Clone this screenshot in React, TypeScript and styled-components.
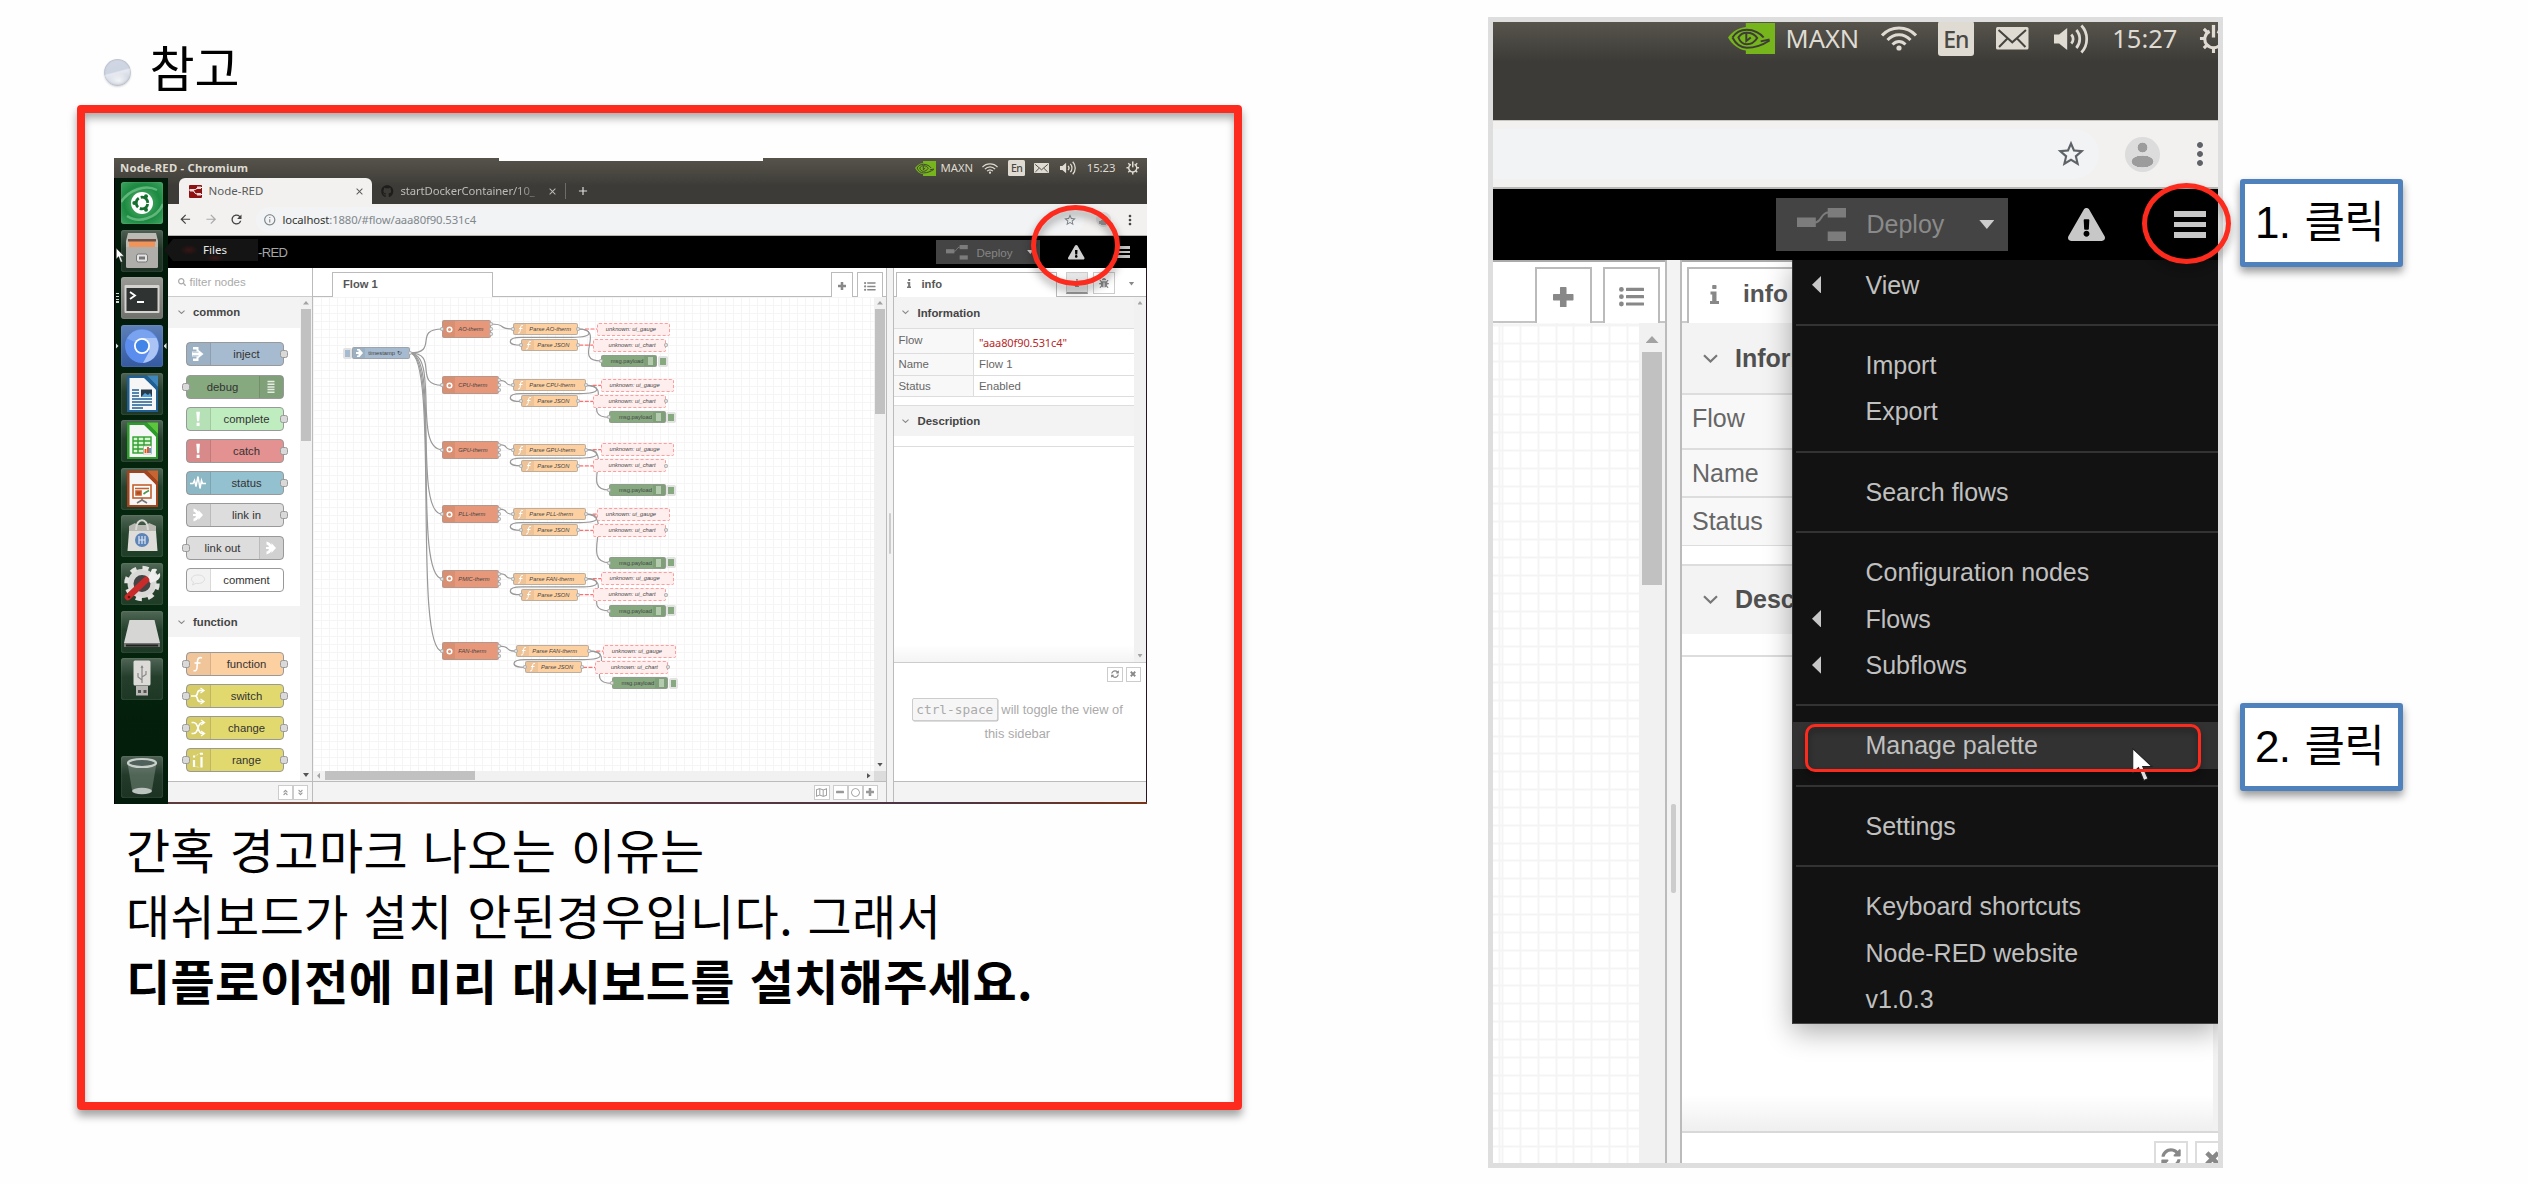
import React from "react";
import styled, { createGlobalStyle, css } from "styled-components";
import {
  FaExclamationTriangle, FaBug, FaSyncAlt,
  FaSearch, FaGithub, FaRegMap, FaAngleDoubleUp, FaAngleDoubleDown, FaRegCircle,
} from "react-icons/fa";
import {
  MdArrowBack, MdArrowForward, MdRefresh, MdInfoOutline, MdClose, MdAdd, MdStarBorder, MdMoreVert,
} from "react-icons/md";

const SANS = `"Liberation Sans", Arial, sans-serif`;
const UBUNTU = `"Noto Sans", "Open Sans", sans-serif`;
const KOREAN = `"Liberation Sans", "Noto Sans CJK KR", sans-serif`;
const MONO = `"DejaVu Sans Mono", monospace`;

const GlobalStyle = createGlobalStyle`
  * { box-sizing: border-box; }
  html, body { margin: 0; padding: 0; background: #fefefe; overflow: hidden; }
  svg { display: block; flex: none; }
`;

/* ---------- slide ---------- */

const Slide = styled.main`
  width: 2528px;
  height: 1184px;
  background: #fefefe;
  display: grid;
  grid-template-columns: 1165px 981px 180px;
  padding-left: 77px;
  font-family: ${SANS};
  overflow: hidden;
  & > :nth-child(2) { margin-left: 246px; }
`;

const NoteColumn = styled.section`
  display: flex;
  flex-direction: column;
`;

const Heading = styled.h1`
  margin: 0;
  height: 105px;
  padding: 31px 0 0 27px;
  display: flex;
  align-items: flex-start;
  gap: 18.5px;
  font: 400 49px/70px "Noto Sans CJK KR", sans-serif;
  color: #000;
`;

const Bullet = styled.span`
  flex: none;
  margin-top: 28px;
  width: 27px;
  height: 27px;
  border-radius: 50%;
  background:
    radial-gradient(ellipse 60% 40% at 55% 80%, rgba(255,255,255,.75), transparent 70%),
    linear-gradient(165deg, #d3d8e4 0%, #cdd4e2 45%, #e6e9f0 50%, #cfd5e0 75%, #a9afba 100%);
  box-shadow: inset 0 0 2px #9298a4, 0 1px 2px rgba(0,0,0,.15);
`;

const RedCard = styled.div`
  width: 1165px;
  height: 1005px;
  border: 8px solid #fd2b1e;
  border-radius: 4px;
  padding: 45px 0 0 29px;
  box-shadow: 0 6px 9px rgba(0,0,0,.36), inset 0 6px 8px -1px rgba(0,0,0,.34);
`;

const Note = styled.p`
  margin: 12px 0 0 12px;
  font: 400 48px/65.5px "Noto Sans CJK KR", sans-serif;
  word-spacing: 3.5px;
  letter-spacing: 0.4px;
  color: #000;
  white-space: nowrap;
  span { display: block; }
`;
const NoteStrong = styled.span`
  font-weight: 700;
`;

const Callouts = styled.aside`
  display: flex;
  flex-direction: column;
  padding: 179px 0 0 17px;
  gap: 436px;
`;
const Callout = styled.div`
  width: 163px;
  height: 88px;
  border: 5px solid #4f81bd;
  border-radius: 3px;
  background: #fff;
  padding-left: 10px;
  display: flex;
  align-items: center;
  white-space: nowrap;
  font: 400 44px/78px ${KOREAN};
  letter-spacing: -0.8px;
  word-spacing: 3px;
  box-shadow: 0 5px 8px rgba(0,0,0,.4);
`;

const Ring = styled.div<{ $x: number; $y: number; $w: number; $h: number }>`
  position: absolute;
  left: ${(p) => p.$x}px;
  top: ${(p) => p.$y}px;
  width: ${(p) => p.$w}px;
  height: ${(p) => p.$h}px;
  border: 5px solid #fd2b1e;
  border-radius: 50%;
  filter: drop-shadow(0 5px 4px rgba(0,0,0,.38));
`;

/* ---------- shared drawings ---------- */

type Size = { w: number; h: number };

const Nvidia = ({ w, h }: Size) => (
  <svg width={w} height={h} viewBox="0 0 48 32" preserveAspectRatio="none">
    <path d="M18 0H48V32H18V28.500C10 27 4 22 0 15 4 9 10 5 18 4z" fill="#76b51b" />
    <g fill="none" stroke="#3d3c37" strokeWidth="2">
      <path d="M4.500 15C8 9.500 13 7 19 7c7 0 14 3.500 17 8" />
      <path d="M4.500 15C8 22 13 25.500 19 25.500c8 0 17-3.500 23-7.500" />
      <path d="M10.500 15c2-3.500 5-5 8.500-5 6 0 9 3 10.500 5.500C27 19.500 23 22 19 22c-4.500 0-7-3-8.500-7z" />
      <path d="M18.500 10.500v8l4.500-3.500" />
      <path d="M33 19l9-2" />
    </g>
  </svg>
);

const Wifi = ({ w, h }: Size) => (
  <svg width={w} height={h} viewBox="0 0 36 25" preserveAspectRatio="none" fill="none" stroke="#dfdbd2" strokeWidth="3">
    <path d="M1 9.500C10-.5 26-.5 35 9.500" />
    <path d="M6.500 14c6.500-7 16.500-7 23 0" />
    <path d="M11.500 18.500c4-4 9-4 13 0" />
    <circle cx="18" cy="22" r="2.600" fill="#dfdbd2" stroke="none" />
  </svg>
);

const Mail = ({ w, h }: Size) => (
  <svg width={w} height={h} viewBox="0 0 32 22" preserveAspectRatio="none">
    <rect width="32" height="22" rx="1.500" fill="#dfdbd2" />
    <path d="M2.500 3l13.500 12L29.500 3M3 19.500l8-8M29 19.500l-8-8" fill="none" stroke="#45443f" strokeWidth="2" />
  </svg>
);

const Volume = ({ w, h }: Size) => (
  <svg width={w} height={h} viewBox="0 0 35 30" preserveAspectRatio="none">
    <path d="M0 10.500h5L13 4v22l-8-6.500H0z" fill="#dfdbd2" />
    <g fill="none" stroke="#dfdbd2" strokeWidth="2.700">
      <path d="M17 10.500c2.500 2.500 2.500 6.500 0 9" />
      <path d="M22 6c4.500 5 4.500 13 0 18" />
      <path d="M27 1.500c7 7.500 7 19.500 0 27" />
    </g>
  </svg>
);

const Gear = ({ s }: { s: number }) => (
  <svg width={s} height={s} viewBox="0 0 30 30">
    <g stroke="#dfdbd2" fill="none">
      <path d="M11 7.500A9 9 0 1 0 19 7.500" strokeWidth="3.200" />
      <path d="M15 1v13" strokeWidth="3.400" />
      <path d="M1 15h5M24 15h5M15 24.500V30M5 5l4 4M25 5l-4 4M5 25l4-4M25 25l-4-4" strokeWidth="3.200" />
    </g>
  </svg>
);

const DeployGlyph = ({ w, h }: Size) => (
  <svg width={w} height={h} viewBox="0 0 50 34" preserveAspectRatio="none">
    <g fill="#7c7c7c">
      <rect x="0" y="9.500" width="19" height="9.500" />
      <rect x="31" y="0" width="18.500" height="9.500" />
      <rect x="31" y="23.500" width="18.500" height="9.500" />
    </g>
    <path d="M18 14.500c7 0 6-10 13.500-10" fill="none" stroke="#7c7c7c" strokeWidth="2" />
  </svg>
);

const Pointer = ({ w, h }: Size) => (
  <svg width={w} height={h} viewBox="0 0 20 32" preserveAspectRatio="none">
    <path d="M.7.700V24l5.500-5 5 12.500 4-1.800-5-11.700h8.800z" fill="#fff" stroke="#222" strokeWidth="1" />
  </svg>
);

const Plus = ({ s }: { s: number }) => (
  <svg width={s} height={s} viewBox="0 0 20 20" fill="currentColor">
    <path d="M7.500 0h5q.7 0 .7.700v6.100h6.100q.7 0 .7.700v5q0 .7-.7.700h-6.100v6.100q0 .7-.7.700h-5q-.7 0-.7-.7v-6.100H.700q-.7 0-.7-.7v-5q0-.7.700-.7h6.100V.700q0-.7.700-.7z" />
  </svg>
);
const Minus = ({ s }: { s: number }) => (
  <svg width={s} height={s} viewBox="0 0 20 20" fill="currentColor"><rect y="7" width="20" height="6" rx="1" /></svg>
);
const BulletList = ({ w, h }: Size) => (
  <svg width={w} height={h} viewBox="0 0 25 19.500" fill="currentColor" preserveAspectRatio="none">
    {[0, 7.3, 14.6].map((y) => (
      <g key={y}>
        <circle cx="2.400" cy={y + 2.4} r="2.400" />
        <rect x="7" y={y + 0.800} width="18" height="3.200" rx=".5" />
      </g>
    ))}
  </svg>
);
const InfoGlyph = ({ w, h }: Size) => (
  <svg width={w} height={h} viewBox="0 0 9 19" fill="currentColor" preserveAspectRatio="none">
    <rect x="2.200" y="0" width="4.300" height="4" rx=".8" />
    <path d="M.5 6.500h6v9.500H9V19H0v-3h2.200V9.500H.500z" />
  </svg>
);
const Chevron = ({ w }: { w: number }) => (
  <svg width={w} height={w * 0.6} viewBox="0 0 15 9" fill="none" stroke="currentColor" strokeWidth="2.200">
    <path d="M1 1.200l6.500 6.300L14 1.200" />
  </svg>
);
const Cross = ({ s }: { s: number }) => (
  <svg width={s} height={s} viewBox="0 0 20 20" stroke="currentColor" strokeWidth="6">
    <path d="M2.500 2.500l15 15M17.500 2.500l-15 15" />
  </svg>
);

const Triangle = styled.i<{ $dir: "up" | "down" | "left" | "right"; $a: number; $b: number; $c?: string }>`
  display: block;
  flex: none;
  width: ${(p) => p.$a}px;
  height: ${(p) => p.$b}px;
  background: ${(p) => p.$c ?? "#555"};
  clip-path: ${(p) =>
    ({
      up: "polygon(50% 0, 100% 100%, 0 100%)",
      down: "polygon(0 0, 100% 0, 50% 100%)",
      left: "polygon(100% 0, 100% 100%, 0 50%)",
      right: "polygon(0 0, 100% 50%, 0 100%)",
    })[p.$dir]};
`;

const Slot = styled.span<{ $ml?: number }>`
  display: flex;
  align-items: center;
  flex: none;
  margin-left: ${(p) => p.$ml ?? 0}px;
`;

/* ---------- desktop window (left) ---------- */

const Desktop = styled.div`
  position: relative;
  width: 1033px;
  height: 646px;
  display: flex;
  flex-direction: column;
  background: #3c3b37;
`;

const TopPanel = styled.div`
  height: 20px;
  flex: none;
  display: flex;
  align-items: center;
  padding-left: 6px;
  background: linear-gradient(#56534b, #45433d);
  font: 400 11.3px/20px ${UBUNTU};
  color: #dfdbd2;
  white-space: nowrap;
`;
const PanelTitle = styled.strong`
  width: 794.500px;
  font-size: 11.3px;
  letter-spacing: 0.2px;
`;
const Lang = styled.span<{ $big?: boolean }>`
  display: block;
  color: #4a4843;
  background: #dfdbd2;
  text-align: center;
  font-family: ${UBUNTU};
  ${(p) =>
    p.$big
      ? css`width: 36px; height: 35px; border-radius: 3px; font-size: 23px; line-height: 36px; letter-spacing: -1px; font-weight: 500;`
      : css`width: 17px; height: 16px; border-radius: 1.5px; font-size: 10.5px; line-height: 16px; letter-spacing: -0.5px; font-weight: 500;`}
`;
const Occluder = styled.div`
  position: absolute;
  left: 385px;
  top: 0;
  width: 264px;
  height: 2.5px;
  background: #fefefe;
`;

const DesktopBody = styled.div`
  flex: 1;
  display: flex;
  min-height: 0;
`;

const Launcher = styled.nav`
  width: 54px;
  flex: none;
  padding: 4.3px 6px 6.3px 5.500px;
  display: flex;
  flex-direction: column;
  gap: 5.600px;
  background: radial-gradient(circle at 60% 60%, #06290f, #021a0a 70%);
  border-left: 1px solid #000;
  & > :last-child { margin-top: auto; }
`;
const Tile = styled.div<{ $bg?: string }>`
  width: 42px;
  height: 42px;
  flex: none;
  border-radius: 3px;
  background: ${(p) => p.$bg ?? "linear-gradient(rgba(255,255,255,.3), rgba(255,255,255,.13) 45%, rgba(255,255,255,.1))"};
  box-shadow: inset 0 0 1.5px rgba(255,255,255,.35);
`;

const Browser = styled.div`
  flex: 1;
  min-width: 0;
  display: flex;
  flex-direction: column;
`;
const TabStrip = styled.div`
  height: 26px;
  flex: none;
  display: flex;
  align-items: flex-end;
  padding-left: 11px;
  background: linear-gradient(#45433d, #3c3b37 30%);
  font: 400 11.5px/26px ${UBUNTU};
`;
const ActiveTab = styled.div`
  width: 193px;
  height: 26px;
  padding: 0 7px 0 10px;
  display: flex;
  align-items: center;
  background: #f2f1f0;
  border-radius: 6px 6px 0 0;
  color: #5a5a5a;
  svg:first-child { margin-right: 6.500px; }
  svg:last-child { margin-left: auto; }
`;
const IdleTab = styled.div`
  height: 26px;
  display: flex;
  align-items: center;
  padding-left: 9px;
  color: #bdbcb8;
  gap: 7px;
`;
const IdleTitle = styled.span`
  width: 139px;
  font-size: 11.3px;
  letter-spacing: -0.1px;
  white-space: nowrap;
  mask-image: linear-gradient(90deg, #000 82%, rgba(0,0,0,.25));
`;
const TabDivider = styled.span`
  width: 1px;
  height: 16px;
  background: #6d6c68;
`;
const AddressBar = styled.div`
  height: 32px;
  flex: none;
  display: flex;
  align-items: center;
  padding-left: 10px;
  background: #f2f1f0;
  border-bottom: 1px solid #b6b4b0;
  color: #444;
  & > svg { margin-right: 11.200px; }
`;
const UrlPill = styled.div`
  flex: 1;
  height: 26px;
  margin-left: 0;
  margin-right: 48px;
  padding: 0 7px 0 7px;
  border-radius: 13px;
  background: #f1f3f4;
  display: flex;
  align-items: center;
  gap: 6.500px;
  font: 400 11.3px/26px ${UBUNTU};
  letter-spacing: -0.12px;
  color: #80868b;
  b { font-weight: 400; color: #333; }
  svg:last-child { margin-left: auto; }
`;
const AddressTools = styled.div`
  display: flex;
  align-items: center;
  margin-left: -36px;
  gap: 11px;
  padding-right: 9px;
`;
const Avatar = styled.span<{ $s: number }>`
  display: block;
  width: ${(p) => p.$s}px;
  height: ${(p) => p.$s}px;
  border-radius: 50%;
  background:
    radial-gradient(circle at 50% 30%, #9c9c9c 15.5%, transparent 17%),
    radial-gradient(ellipse 44% 24% at 50% 70%, #9c9c9c 68%, transparent 72%),
    #dcdcdc;
`;

const EditorHeader = styled.header`
  height: 32px;
  flex: none;
  display: flex;
  align-items: center;
  background: #000;
  color: #c7c7c7;
  padding-left: 90px;
  font-size: 13px;
  position: relative;
`;
const Brand = styled.span`
  width: 678px;
  color: #a5a5a5;
  letter-spacing: -0.6px;
  padding-top: 1px;
`;
const FilesTip = styled.div`
  position: absolute;
  left: -4px;
  top: 3px;
  width: 94px;
  height: 22px;
  padding-left: 39px;
  background:
    radial-gradient(ellipse 9px 5px at 25px 11px, #3a1515, transparent),
    radial-gradient(ellipse 9px 4px at 51px 19px, #3a1515, transparent),
    #141414;
  clip-path: polygon(0 50%, 9px 0, 100% 0, 100% 100%, 9px 100%);
  font: 400 11.5px/22px ${UBUNTU};
  color: #e8e8e8;
`;
const DeployButton = styled.div`
  width: 104px;
  height: 24px;
  display: flex;
  align-items: center;
  padding-left: 10px;
  background: #444;
  color: #868686;
  font-size: 11.6px;
  & > svg { margin-right: 8.500px; }
  & > i { margin-left: 14.500px; }
`;
const Burger = styled.span<{ $w: number; $h: number; $ml: number }>`
  width: ${(p) => p.$w}px;
  height: ${(p) => p.$h}px;
  margin-left: ${(p) => p.$ml}px;
  background: linear-gradient(#c7c7c7 22%, transparent 22% 39%, #c7c7c7 39% 61%, transparent 61% 78%, #c7c7c7 78%);
`;

const Editor = styled.div`
  flex: 1;
  display: flex;
  min-height: 0;
  background: #fff;
  border-right: 1.5px solid #2a1420;
`;
const DeskEdge = styled.div`
  height: 2px;
  flex: none;
  background: linear-gradient(90deg, #5d3a3f, #85503c 25%, #5a3740 50%, #4b3444 80%, #7a3518);
`;

const Palette = styled.div`
  width: 145px;
  flex: none;
  display: flex;
  flex-direction: column;
  border-right: 1px solid #bbb;
`;
const Filter = styled.div`
  height: 29px;
  flex: none;
  display: flex;
  align-items: center;
  gap: 4px;
  padding-left: 9.500px;
  border-bottom: 1px solid #ccc;
  color: #aaa;
  font-size: 11.500px;
`;
const PaletteBody = styled.div`
  flex: 1;
  display: flex;
  min-height: 0;
`;
const PaletteList = styled.div`
  flex: 1;
  overflow: hidden;
`;
const Category = styled.div`
  height: 30.6px;
  display: flex;
  align-items: center;
  gap: 8.500px;
  padding-left: 9.500px;
  background: #f3f3f3;
  color: #444;
  font: 700 11.3px ${SANS};
  & > svg { color: #888; }
`;
const NodeStack = styled.div`
  padding: 14.700px 0 14.500px 17.5px;
  display: flex;
  flex-direction: column;
  gap: 8.230px;
`;
const PNode = styled.div<{ $c: string; $right?: boolean }>`
  position: relative;
  width: 98px;
  height: 24px;
  display: flex;
  flex-direction: ${(p) => (p.$right ? "row-reverse" : "row")};
  background: ${(p) => p.$c};
  border: 1px solid #999;
  border-radius: 4px;
  color: #333;
  font: 400 11.3px/22px ${SANS};
`;
const PIcon = styled.span<{ $right?: boolean }>`
  width: 24px;
  display: flex;
  align-items: center;
  justify-content: center;
  background: rgba(0,0,0,.05);
  border-${(p) => (p.$right ? "left" : "right")}: 1px solid rgba(0,0,0,.1);
`;
const PLabel = styled.span`
  flex: 1;
  text-align: center;
`;
const Port = styled.i<{ $side: "left" | "right" }>`
  position: absolute;
  ${(p) => p.$side}: -5px;
  top: 7px;
  width: 8px;
  height: 8px;
  border: 1px solid #999;
  border-radius: 2.5px;
  background: #d9d9d9;
`;
const Scroll = styled.div<{ $w: number; $pt?: number }>`
  width: ${(p) => p.$w}px;
  flex: none;
  display: flex;
  flex-direction: column;
  align-items: center;
  background: #f1f1f1;
  padding: ${(p) => p.$pt ?? 4}px 0 4px;
`;
const Thumb = styled.div<{ $w: number; $h: number; $m?: number }>`
  width: ${(p) => p.$w}px;
  height: ${(p) => p.$h}px;
  flex: none;
  margin: ${(p) => p.$m ?? 0}px 0;
  background: #c1c1c1;
`;
const Spacer = styled.span`
  flex: 1;
`;
const Footer = styled.div<{ $pr?: number }>`
  height: 21px;
  flex: none;
  display: flex;
  align-items: center;
  justify-content: flex-end;
  padding-right: ${(p) => p.$pr ?? 0}px;
  background: #f3f3f3;
  border-top: 1px solid #bbb;
`;
const MiniButton = styled.span<{ $ml?: number }>`
  width: 15.500px;
  height: 15px;
  margin-left: ${(p) => p.$ml ?? -0.5}px;
  display: flex;
  align-items: center;
  justify-content: center;
  border: 1px solid #ccc;
  background: #fff;
  color: #999;
`;

const Workspace = styled.div`
  width: 574px;
  flex: none;
  display: flex;
  flex-direction: column;
  border-right: 1px solid #bbb;
`;
const WorkTabs = styled.div`
  height: 29px;
  flex: none;
  display: flex;
  align-items: flex-end;
  padding-left: 19px;
  box-shadow: inset 0 -1px #bbb;
`;
const FlowTab = styled.div`
  width: 161px;
  height: 25px;
  padding-left: 10px;
  border: 1px solid #bbb;
  border-bottom: none;
  background: #fff;
  color: #555;
  font: 700 11.2px/23px ${SANS};
`;
const TabButton = styled.span<{ $s: number; $h: number; $ml?: number | string }>`
  width: ${(p) => p.$s}px;
  height: ${(p) => p.$h}px;
  margin-left: ${(p) => (typeof p.$ml === "string" ? p.$ml : `${p.$ml ?? 0}px`)};
  padding-top: 2px;
  display: flex;
  align-items: center;
  justify-content: center;
  border: 1px solid #bbb;
  border-bottom: none;
  background: #fff;
  color: #888;
`;
const CanvasRow = styled.div`
  flex: 1;
  display: flex;
  min-height: 0;
`;
const Canvas = styled.div`
  position: relative;
  width: 562px;
  overflow: hidden;
  background:
    repeating-linear-gradient(90deg, #f5f5f5 0 1px, transparent 1px 8.07px),
    repeating-linear-gradient(#f5f5f5 0 1px, transparent 1px 8.07px),
    #fff;
`;
const HScroll = styled.div`
  height: 10.5px;
  flex: none;
  display: flex;
  align-items: center;
  padding-left: 4px;
  background: #f1f1f1;
`;
const Corner = styled.span`
  width: 12px;
  height: 10.5px;
  margin-left: 3.5px;
  background: #dcdcdc;
`;
const Wires = styled.svg`
  position: absolute;
  left: 0;
  top: 0;
`;
const FlowNode = styled.div<{ $x: number; $y: number; $w: number; $h: number; $c: string; $pad: number; $unknown?: boolean; $plain?: boolean }>`
  position: absolute;
  left: ${(p) => p.$x - 313}px;
  top: ${(p) => p.$y - p.$h / 2 - 297}px;
  width: ${(p) => p.$w}px;
  height: ${(p) => p.$h}px;
  padding-left: ${(p) => p.$pad}px;
  background: ${(p) => p.$c};
  border: ${(p) => (p.$unknown ? "1px dashed #ff9c9c" : "0.5px solid rgba(150,150,150,.6)")};
  border-radius: 2px;
  color: #444;
  font: ${(p) => (p.$plain ? "normal" : "italic")} 400 5.8px/${(p) => p.$h - 1.5}px ${SANS};
  white-space: nowrap;
`;
const NodeIcon = styled.span<{ $w: number; $right?: boolean }>`
  position: absolute;
  ${(p) => (p.$right ? "right" : "left")}: 0;
  top: 0;
  bottom: 0;
  width: ${(p) => p.$w}px;
  background: rgba(0,0,0,.06);
  display: flex;
  align-items: center;
  justify-content: center;
`;
const Dot = styled.i<{ $x: number; $y: number }>`
  position: absolute;
  left: ${(p) => p.$x - 315.1}px;
  top: ${(p) => p.$y - 299.1}px;
  width: 4.2px;
  height: 4.2px;
  border-radius: 1.500px;
  border: 0.600px solid #aaa;
  background: #dcdcdc;
`;
const NodeButton = styled.i<{ $x: number; $y: number; $c: string }>`
  position: absolute;
  left: ${(p) => p.$x - 313}px;
  top: ${(p) => p.$y - 302.5}px;
  width: 9.5px;
  height: 11px;
  border: 2px solid #e2e2e2;
  border-radius: 2px;
  background: ${(p) => p.$c};
`;

const Separator = styled.div<{ $w: number; $b?: number }>`
  width: ${(p) => p.$w}px;
  flex: none;
  display: flex;
  justify-content: center;
  background: #f3f3f3;
  border-right: ${(p) => p.$b ?? 1}px solid #bbb;
`;
const Grip = styled.span<{ $w: number; $h: number; $mt: number }>`
  width: ${(p) => p.$w}px;
  height: ${(p) => p.$h}px;
  margin-top: ${(p) => p.$mt}px;
  border-radius: 2px;
  background: #ccc;
`;
const Sidebar = styled.div`
  flex: 1;
  min-width: 0;
  display: flex;
  flex-direction: column;
`;
const SideTabs = styled.div`
  height: 29px;
  flex: none;
  display: flex;
  align-items: flex-end;
  padding-left: 2px;
  box-shadow: inset 0 -1px #bbb;
`;
const InfoTab = styled.div`
  width: 161.5px;
  height: 25.5px;
  padding: 0 0 2px 10px;
  display: flex;
  align-items: center;
  gap: 10.500px;
  border: 1px solid #bbb;
  border-bottom: none;
  background: #fff;
  color: #555;
  font: 700 11.2px/24px ${SANS};
  svg { color: #777; }
`;
const SideButton = styled.span<{ $on?: boolean; $ml: number }>`
  width: 22px;
  height: 22px;
  margin-left: ${(p) => p.$ml}px;
  margin-bottom: 3px;
  display: flex;
  align-items: center;
  justify-content: center;
  border: 1px solid #ccc;
  border-bottom: ${(p) => (p.$on ? "2px solid #999" : "1px solid #ccc")};
  background: ${(p) => (p.$on ? "#e6e6e6" : "#fff")};
  color: #888;
`;
const SideCaret = styled.span`
  height: 27px;
  margin-left: 13.500px;
  display: flex;
  align-items: center;
`;
const SideBody = styled.div`
  height: 364.5px;
  flex: none;
  display: flex;
`;
const SideContent = styled.div`
  flex: 1;
  background: linear-gradient(transparent 348px, #f4f4f4);
`;
const Section = styled.div<{ $mt?: number }>`
  height: 31px;
  margin-top: ${(p) => p.$mt ?? 0}px;
  display: flex;
  align-items: center;
  gap: 8.500px;
  padding-left: 8.500px;
  background: #f3f3f3;
  border-top: ${(p) => (p.$mt ? "1px solid #ddd" : "none")};
  color: #444;
  font: 700 11.4px ${SANS};
  & > svg { color: #888; }
`;
const PropRow = styled.div<{ $h: number }>`
  height: ${(p) => p.$h}px;
  display: grid;
  grid-template-columns: 80.500px 1fr;
  align-items: center;
  border-top: 1px solid #ddd;
  background: linear-gradient(90deg, #f8f8f8 79.500px, #ddd 79.500px 80.5px, #fff 80.5px);
  color: #666;
  font-size: 11.4px;
  & > span { padding-left: 5px; }
`;
const TopCell = styled.span`
  padding-bottom: 3px;
`;
const IdValue = styled.span`
  color: #b72828;
  font: 400 11px "Noto Sans", sans-serif;
  padding-top: 2px;
  letter-spacing: -0.1px;
`;
const Rule = styled.div<{ $mt: number }>`
  margin-top: ${(p) => p.$mt}px;
  height: 1px;
  background: #ddd;
`;
const Tips = styled.div`
  flex: 1;
  border-top: 1px solid #ccc;
  padding: 4px 5px 0 0;
  color: #aaa;
  font-size: 12.850px;
  line-height: 24px;
  text-align: center;
  white-space: nowrap;
`;
const TipButtons = styled.div`
  display: flex;
  justify-content: flex-end;
  gap: 3px;
  height: 31px;
  svg { color: #888; }
`;
const Kbd = styled.kbd`
  display: inline-block;
  height: 23px;
  padding: 0 3.500px;
  border: 1px solid #ccc;
  border-radius: 2px;
  box-shadow: 0.5px 0.500px 0 #bbb;
  background: #f6f6f6;
  font: 400 12.800px/21px ${MONO};
`;

/* ---------- launcher artwork ---------- */

const docTile = (dark: string, light: string, body: React.ReactNode) => (
  <Tile>
    <svg width="42" height="42" viewBox="0 0 42 42">
      <path d="M6 2.500h20L37 14v25H6z" fill={dark} />
      <path d="M8.500 5H24l11 11.500V37h-26.500z" fill="#f6f6f6" />
      <path d="M26 2.500H37V14z" fill={light} />
      <path d="M23 5l12 11.500V12L28 5z" fill={dark} />
      {body}
    </svg>
  </Tile>
);

const LauncherIcons = () => (
  <Launcher>
    <Tile $bg="radial-gradient(circle at 50% 50%, #5fb878, #1c8a41 60%, #3fa361)">
      <svg width="42" height="42" viewBox="0 0 42 42">
        <path d="M0 20C8 8 24 2 36 8M42 22C36 36 18 42 6 34" stroke="#7cc893" strokeWidth="2.500" fill="none" opacity=".7" />
        <circle cx="21" cy="21" r="11" fill="#fff" />
        <circle cx="21" cy="21" r="5.800" fill="none" stroke="#15702f" strokeWidth="2.800" strokeDasharray="10.100 2.050" strokeDashoffset="-1" />
        <circle cx="13.300" cy="21" r="2" fill="#15702f" />
        <circle cx="25" cy="14.200" r="2" fill="#15702f" />
        <circle cx="25" cy="27.800" r="2" fill="#15702f" />
      </svg>
    </Tile>
    <Tile>
      <svg width="42" height="42" viewBox="0 0 42 42">
        <path d="M7 3h28l2 8v26H5V11z" fill="#bcbab5" />
        <path d="M8 10h26v8H8z" fill="#f0945a" />
        <path d="M7 9h28v2.500H7z" fill="#6a5046" />
        <path d="M5 17h32v19.500q0 1.500-1.500 1.500h-29Q5 38 5 36.500z" fill="#b0aeaa" />
        <rect x="15.500" y="24" width="11" height="8" rx="2" fill="#e4e4e4" stroke="#777" />
        <rect x="18" y="26.500" width="6" height="3" fill="#777" />
      </svg>
    </Tile>
    <Tile $bg="linear-gradient(#9a9a96, #6f6f6b)">
      <svg width="42" height="42" viewBox="0 0 42 42">
        <rect x="3.500" y="8" width="35" height="28" rx="1" fill="#d4d3cf" />
        <rect x="5.500" y="11" width="31" height="23" fill="#2f3331" />
        <path d="M9 15l5 3.500-5 3.500M16 25h7" stroke="#fff" strokeWidth="1.800" fill="none" />
      </svg>
    </Tile>
    <Tile $bg="linear-gradient(#5d80b8, #3459a0)">
      <svg width="42" height="42" viewBox="0 0 42 42">
        <circle cx="21" cy="21" r="17" fill="#5b8def" />
        <path d="M21 13h14.500A17 17 0 0 1 22 38l6.500-12z" fill="#a9c4f5" />
        <path d="M6 13.500A17 17 0 0 1 35.500 13H21a8 8 0 0 0-7 4z" fill="#79a3ef" />
        <circle cx="21" cy="21" r="8" fill="#fff" />
        <circle cx="21" cy="21" r="6.200" fill="#4285e8" />
      </svg>
    </Tile>
    {docTile("#1f5f93", "#3f86bd", (
      <g stroke="#1f5f93" strokeWidth="1.600">
        <path d="M11 17h7M11 20h7M11 23h7M11 26h20M11 29h20M11 32h20M11 35h11" />
        <rect x="20" y="16.500" width="11" height="7.500" fill="#263a4a" stroke="none" />
        <path d="M20 24l4-4 3 2 2-2 2 4z" fill="#53a4dd" stroke="none" />
      </g>
    ))}
    {docTile("#2d9c2d", "#5ac63c", (
      <g stroke="#2fa02f" strokeWidth="1.400" fill="none">
        <rect x="12" y="17" width="18" height="16" fill="#d9f4d0" />
        <path d="M12 21h18M12 25h18M12 29h18M17 17v16M23 17v16" />
        <rect x="22.500" y="26" width="8" height="8" fill="#fff" stroke="#aaa" strokeWidth=".6" />
        <path d="M24.500 33v-4M27 33v-6" stroke="#e65a1e" strokeWidth="2" />
        <path d="M29 33v-5" stroke="#2f7fc8" strokeWidth="1.600" />
      </g>
    ))}
    {docTile("#a4431c", "#c86432", (
      <g stroke="#c2602f" strokeWidth="1.600" fill="none">
        <rect x="12" y="17" width="18" height="13" fill="#fff" />
        <path d="M14 20.500h14" />
        <path d="M15 23h5v4h-5z" fill="#b24a20" />
        <path d="M22.500 26l2-1.500 3.500-2" stroke="#4a9a4a" />
        <path d="M21 30v2M16 35l5-3 5 3" stroke="#777" />
      </g>
    ))}
    <Tile>
      <svg width="42" height="42" viewBox="0 0 42 42">
        <path d="M8 16h27l1.500 20H6.500z" fill="#deddda" />
        <path d="M8 11l6-3 2 2h10l2-2 7 3v5H8z" fill="#b9b9b4" />
        <path d="M15 15c0-13 12-13 12 0" fill="none" stroke="#d8d8d4" strokeWidth="2" />
        <circle cx="21" cy="25" r="7" fill="#5c84b8" />
        <path d="M18 21v8M21 21v8M24 21v8M17.500 25h7" stroke="#dfe8f3" strokeWidth="1.200" />
      </svg>
    </Tile>
    <Tile>
      <svg width="42" height="42" viewBox="0 0 42 42">
        <circle cx="21" cy="20.500" r="11.500" fill="#444" stroke="#d8d8d6" strokeWidth="6" />
        <circle cx="21" cy="20.500" r="15.500" fill="none" stroke="#e2e2e0" strokeWidth="4.500" strokeDasharray="6.087 6.087" />
        <path d="M27 15l4-9q5-1 5 1l-3 4 3 1 3-2q1 6-4 8l-6 2z" fill="#efefef" />
        <path d="M7 34L25 17" stroke="#c92a2a" strokeWidth="6.500" strokeLinecap="round" />
        <circle cx="8" cy="34" r="1.300" fill="#701010" />
      </svg>
    </Tile>
    <Tile>
      <svg width="42" height="42" viewBox="0 0 42 42">
        <path d="M8.500 9h25l5.500 23H3z" fill="#d6d6d4" />
        <path d="M3 32h36v4H3z" fill="#777" />
        <path d="M5 33.500h32v2H5z" fill="#222" />
      </svg>
    </Tile>
    <Tile>
      <svg width="42" height="42" viewBox="0 0 42 42">
        <rect x="12.500" y="2.500" width="17" height="25" rx="1.500" fill="#dcdbd8" />
        <rect x="15" y="28" width="12" height="9.500" fill="#b9b8b4" />
        <path d="M17 32h3v3h-3zM22.500 32h3v3h-3z" fill="#555" />
        <path d="M21 25V8M21 22l-4-3v-4M21 19l4-2.500V13" stroke="#888" strokeWidth="1.200" fill="none" />
        <path d="M19.500 10L21 7l1.500 3z" fill="#888" />
      </svg>
    </Tile>
    <Tile>
      <svg width="42" height="42" viewBox="0 0 42 42">
        <path d="M6.500 7l4.500 27q10 5 20 0L35.500 7z" fill="rgba(200,215,205,.28)" />
        <ellipse cx="21" cy="7" rx="14" ry="4" fill="#50605a" stroke="#c8d0cb" strokeWidth="2.200" />
        <ellipse cx="21" cy="35" rx="10" ry="3.200" fill="#bcc4bf" />
      </svg>
    </Tile>
  </Launcher>
);

const RunningMark = styled.span<{ $y: number; $x: number; $dir: "left" | "right" }>`
  position: absolute;
  left: ${(p) => p.$x}px;
  top: ${(p) => p.$y}px;
  width: 3px;
  height: 6px;
  background: #e4e4e4;
  clip-path: ${(p) => (p.$dir === "right" ? "polygon(0 0, 100% 50%, 0 100%)" : "polygon(100% 0, 100% 100%, 0 50%)")};
`;
const WindowTicks = styled.span`
  position: absolute;
  left: 1.5px;
  top: 135px;
  width: 3px;
  height: 10px;
  background: repeating-linear-gradient(#d8d8d8 0 1.5px, transparent 1.5px 2.800px);
`;

/* ---------- palette ---------- */

const W = ({ children }: { children: React.ReactNode }) => (
  <svg width="18" height="18" viewBox="0 0 18 18" fill="none" stroke="#fff" strokeWidth="1.600">{children}</svg>
);
const icons: Record<string, React.ReactNode> = {
  arrow: <W><path d="M4 2h5.500v3L14.500 9l-5 4v3H4v-2.500h3.500v-2H3v-5h4.500v-2H4z" fill="#fff" strokeWidth="0" /><path d="M3.500 7.200h6M3.500 10.800h6" stroke="#9db1c5" strokeWidth=".8" /></W>,
  list: <W><path d="M5.500 3.500h7M5.500 6.200h7M5.500 8.900h7M5.500 11.600h7M5.500 14.300h7" strokeWidth="1.500" opacity=".8" /></W>,
  bang: <W><path d="M7.300 1.800h3.600l-.7 9.400H8z" fill="#fff" stroke="none" /><rect x="7.600" y="12.700" width="3" height="3.300" fill="#fff" stroke="none" /></W>,
  pulse: <W><path d="M1 9.500h3l1.500-3 1.500 6L9 2.500l2 12 1.500-8 1 3H17" strokeWidth="1.500" /></W>,
  link: <W><path d="M4.500 2.500q3.500.5 5 3.500V4l4.500 5-4.500 5v-2q-1.500 3-5 3.500V12.500q2 0 2.500-2.500H4V8h3Q6.500 5.500 4.500 5.500z" fill="#fff" stroke="none" /></W>,
  comment: <W><path d="M9 4c4 0 6.500 1.800 6.500 4.200S13 12.500 9 12.500c-1 0-1.500-.2-2-.2L3.500 14l1-2.800C3.200 10.500 2.500 9.500 2.500 8.200 2.500 5.800 5 4 9 4z" stroke="#ddd" strokeWidth="1" /></W>,
  func: <W><path d="M13 3q-4-1.500-4.500 3L8 13q-.5 3.500-3.500 2.500M5.500 8h6" /></W>,
  sw: <W><path d="M2 9h4q2 0 2.500-3T12 3.500h2M6 9q2 0 2.500 3t3.500 2.500h2" /><path d="M11.500 1l3.500 2.500-3.500 2.500M11.500 12l3.500 2.500-3.500 2.500" strokeWidth="1.300" /></W>,
  change: <W><path d="M2.500 3.500h2q3 0 4.500 5.500t4.500 5.500H15M2.500 14.500h2q3 0 4.500-5.500t4.500-5.500H15" /><path d="M12 1l3.500 2.500L12 6M12 12l3.500 2.500L12 17" strokeWidth="1.300" /></W>,
  range: <W><path d="M5 9v7M12.500 6v10.500" strokeWidth="2.200" /><path d="M4 5.500h2M11 2.700h3" strokeWidth="2" /><path d="M6.500 5l4-2.500M6.500 15.500l4 1" strokeWidth=".7" strokeDasharray="1 1" /></W>,
};

type PaletteItem = { label: string; c: string; icon: string; right?: boolean; inp?: boolean; out?: boolean };
const COMMON: PaletteItem[] = [
  { label: "inject", c: "#a6bbcf", icon: "arrow", out: true },
  { label: "debug", c: "#87a980", icon: "list", right: true, inp: true },
  { label: "complete", c: "#c0edc0", icon: "bang", out: true },
  { label: "catch", c: "#e49191", icon: "bang", out: true },
  { label: "status", c: "#94c1d0", icon: "pulse", out: true },
  { label: "link in", c: "#dddddd", icon: "link", out: true },
  { label: "link out", c: "#dddddd", icon: "link", right: true, inp: true },
  { label: "comment", c: "#ffffff", icon: "comment" },
];
const FUNCTIONS: PaletteItem[] = [
  { label: "function", c: "#fdd0a2", icon: "func", inp: true, out: true },
  { label: "switch", c: "#e2d96e", icon: "sw", inp: true, out: true },
  { label: "change", c: "#e2d96e", icon: "change", inp: true, out: true },
  { label: "range", c: "#e2d96e", icon: "range", inp: true, out: true },
];
const PaletteNodes = ({ items }: { items: PaletteItem[] }) => (
  <NodeStack>
    {items.map((n) => (
      <PNode key={n.label} $c={n.c} $right={n.right}>
        <PIcon $right={n.right}>{icons[n.icon]}</PIcon>
        <PLabel>{n.label}</PLabel>
        {n.inp && <Port $side="left" />}
        {n.out && <Port $side="right" />}
      </PNode>
    ))}
  </NodeStack>
);

/* ---------- flow diagram ---------- */

type Group = { name: string; parse: string; y: number; tw: number; px: number; pw: number; jx: number; gx: number; cx: number; mx: number; my: number };
const GROUPS: Group[] = [
  { name: "AO-therm", parse: "Parse AO-therm", y: 329, tw: 48.4, px: 513.3, pw: 64.700, jx: 521.3, gx: 597.3, cx: 593, mx: 601, my: 361 },
  { name: "CPU-therm", parse: "Parse CPU-therm", y: 385.3, tw: 56.600, px: 513.3, pw: 72.400, jx: 521.3, gx: 601, cx: 593, mx: 609.3, my: 417.4 },
  { name: "GPU-therm", parse: "Parse GPU-therm", y: 449.700, tw: 56.600, px: 513.3, pw: 72.400, jx: 521.3, gx: 601, cx: 593, mx: 609.3, my: 490 },
  { name: "PLL-therm", parse: "Parse PLL-therm", y: 514.200, tw: 56.600, px: 513.3, pw: 72.400, jx: 521.3, gx: 597.3, cx: 593, mx: 609.3, my: 562.600 },
  { name: "PMIC-therm", parse: "Parse FAN-therm", y: 578.600, tw: 56.600, px: 513.3, pw: 72.400, jx: 521.3, gx: 601, cx: 593, mx: 609.3, my: 610.800 },
  { name: "FAN-therm", parse: "Parse FAN-therm", y: 651.200, tw: 56.600, px: 516.3, pw: 73, jx: 525, gx: 603.3, cx: 595.4, mx: 611.700, my: 683.400 },
];

const wire = (x1: number, y1: number, x2: number, y2: number) => {
  const d = Math.hypot(x2 - x1, y2 - y1);
  const k = 30 * Math.min(1, d / 40);
  return `M${x1} ${y1}C${x1 + k} ${y1} ${x2 - k} ${y2} ${x2} ${y2}`;
};
const loopBack = (x1: number, y1: number, x2: number, y2: number) => {
  const m = (y1 + y2) / 2;
  return `M${x1} ${y1}C${x1 + 8} ${y1} ${x1 + 11} ${y1 + 2} ${x1 + 11} ${y1 + 4.3}S${x1 + 5} ${m + 0.3} ${x1 - 6} ${m + 0.3}L${x2} ${m + 0.3}C${x2 - 7} ${m + 0.3} ${x2 - 11} ${m + 1} ${x2 - 11} ${y2 - 3.7}S${x2 - 7} ${y2} ${x2} ${y2}`;
};

const FnIcon = () => (
  <NodeIcon $w={12}>
    <svg width="7" height="10" viewBox="0 0 7 10"><path d="M6 1.500Q4 .5 3.700 3L3 7.500Q2.700 9.500 1 9M2 4.500h3.500" stroke="#fff" fill="none" /></svg>
  </NodeIcon>
);

const Flow = () => (
  <Canvas>
    <Wires width="562" height="474" viewBox="313 297 562 474">
      <g fill="none" stroke="#999" strokeWidth="1.200">
        {GROUPS.map((g) => (
          <React.Fragment key={g.name}>
            <path d={wire(409.700, 353, 442.3, g.y)} />
            <path d={wire(442.3 + g.tw, g.y - 5, g.px, g.y)} />
            <path d={wire(g.px + g.pw, g.y, g.mx, g.my)} />
            <path d={loopBack(g.px + g.pw, g.y, g.jx, g.y + 16.100)} />
          </React.Fragment>
        ))}
      </g>
      <g stroke="#ff6f6f" strokeWidth="1.200" strokeDasharray="4 1.500">
        {GROUPS.map((g) => (
          <path key={g.name} d={`M${g.px + g.pw + 7} ${g.y}H${g.gx}M${g.jx + 58} ${g.y + 16.100}H${g.cx}`} />
        ))}
      </g>
    </Wires>
    <NodeButton $x={342.700} $y={353} $c="#a6bbcf" />
    <FlowNode $plain $x={352.3} $y={353} $w={57.4} $h={12} $c="#a6bbcf" $pad={15}>
      <NodeIcon $w={12}><svg width="7" height="8" viewBox="0 0 7 8"><path d="M1 0h2.500L7 4 3.500 8H1V6.500h1.500v-1.500H0V3h2.500V1.500H1z" fill="#fff" /></svg></NodeIcon>
      timestamp ↻
    </FlowNode>
    <Dot $x={409.700} $y={353} />
    {GROUPS.map((g) => (
      <React.Fragment key={g.name}>
        <FlowNode $x={442.3} $y={g.y} $w={g.tw} $h={18} $c="#e7987a" $pad={15}>
          <NodeIcon $w={11.700}><svg width="7" height="7" viewBox="0 0 7 7"><circle cx="3.500" cy="3.500" r="2.300" fill="none" stroke="#fff" strokeWidth="1.500" /></svg></NodeIcon>
          {g.name}
        </FlowNode>
        <Dot $x={442.3} $y={g.y} />
        {[-5, 0, 5].map((o) => <Dot key={o} $x={442.3 + g.tw} $y={g.y + o} />)}
        <FlowNode $x={g.px} $y={g.y} $w={g.pw} $h={12} $c="#fdd0a2" $pad={15}><FnIcon />{g.parse}</FlowNode>
        <Dot $x={g.px} $y={g.y} />
        <Dot $x={g.px + g.pw} $y={g.y} />
        <FlowNode $x={g.jx} $y={g.y + 16.1} $w={56.600} $h={12} $c="#fdd0a2" $pad={15}><FnIcon />Parse JSON</FlowNode>
        <Dot $x={g.jx} $y={g.y + 16.1} />
        <Dot $x={g.jx + 56.600} $y={g.y + 16.1} />
        <FlowNode $unknown $x={g.gx} $y={g.y} $w={72.600} $h={13} $c="#ffeeee" $pad={7.5}>unknown: ui_gauge</FlowNode>
        <FlowNode $unknown $x={g.cx} $y={g.y + 16.1} $w={72.600} $h={13} $c="#ffeeee" $pad={14.5}>unknown: ui_chart</FlowNode>
        <Dot $x={g.cx + 72.600} $y={g.y + 16.1} />
        <FlowNode $plain $x={g.mx} $y={g.my} $w={56.4} $h={12} $c="#87a980" $pad={8.700}>
          msg.payload
          <NodeIcon $w={12} $right><svg width="5" height="8"><rect width="5" height="8" fill="#b4cbb0" /></svg></NodeIcon>
        </FlowNode>
        <Dot $x={g.mx} $y={g.my} />
        <NodeButton $x={g.mx + 57} $y={g.my} $c="#87a980" />
      </React.Fragment>
    ))}
  </Canvas>
);

const PointerSpot = styled.div<{ $x: number; $y: number }>`
  position: absolute;
  left: ${(p) => p.$x}px;
  top: ${(p) => p.$y}px;
`;

const DesktopShot = () => (
  <Desktop>
    <TopPanel>
      <PanelTitle>Node-RED - Chromium</PanelTitle>
      <Slot><Nvidia w={21.500} h={15} /></Slot>
      <Slot $ml={4.5}>MAXN</Slot>
      <Slot $ml={9}><Wifi w={16} h={11} /></Slot>
      <Slot $ml={10}><Lang>En</Lang></Slot>
      <Slot $ml={9}><Mail w={15} h={10} /></Slot>
      <Slot $ml={11}><Volume w={16.500} h={14} /></Slot>
      <Slot $ml={10}>15:23</Slot>
      <Slot $ml={10.500}><Gear s={13.500} /></Slot>
    </TopPanel>
    <Occluder />
    <DesktopBody>
      <LauncherIcons />
      <Browser>
        <TabStrip>
          <ActiveTab>
            <svg width="13" height="13" viewBox="0 0 13 13"><rect width="13" height="13" rx="1" fill="#8f1010" /><path d="M0 5h4q3 0 5-2.500h4M4 5q2 4.500 5 4.500h4" stroke="#fff" fill="none" /><path d="M1 4h4v2.500H1zM8 1.500h4V4H8zM8 8h4v2.500H8z" fill="#f2d8d8" /></svg>
            Node-RED
            <MdClose size={11} />
          </ActiveTab>
          <IdleTab>
            <FaGithub size={12.5} color="#1e1d1b" />
            <IdleTitle>startDockerContainer/10_</IdleTitle>
            <MdClose size={11} />
            <TabDivider />
            <Slot $ml={3}><MdAdd size={14} color="#ddd" /></Slot>
          </IdleTab>
        </TabStrip>
        <AddressBar>
          <MdArrowBack size={14.500} />
          <MdArrowForward size={14.500} color="#aaa" />
          <MdRefresh size={15} />
          <UrlPill>
            <MdInfoOutline size={13.5} />
            <span><b>localhost</b>:1880/#flow/aaa80f90.531c4</span>
            <MdStarBorder size={14} />
          </UrlPill>
          <AddressTools>
            <Avatar $s={15} />
            <MdMoreVert size={16} />
          </AddressTools>
        </AddressBar>
        <EditorHeader>
          <FilesTip>Files</FilesTip>
          <Brand>-RED</Brand>
          <DeployButton><DeployGlyph w={22} h={15} />Deploy<Triangle $dir="down" $a={6.500} $b={4} $c="#ccc" /></DeployButton>
          <Slot $ml={28}><FaExclamationTriangle size={16.500} color="#d0d0d0" /></Slot>
          <Burger $w={14.500} $h={12.500} $ml={31} />
        </EditorHeader>
        <Editor>
          <Palette>
            <Filter><FaSearch size={8} />filter nodes</Filter>
            <PaletteBody>
              <PaletteList>
                <Category><Chevron w={7} />common</Category>
                <PaletteNodes items={COMMON} />
                <Category><Chevron w={7} />function</Category>
                <PaletteNodes items={FUNCTIONS} />
              </PaletteList>
              <Scroll $w={12}>
                <Triangle $dir="up" $a={6} $b={3.5} $c="#a3a3a3" />
                <Thumb $w={9.500} $h={132} $m={4.500} />
                <Spacer />
                <Triangle $dir="down" $a={6} $b={4} />
              </Scroll>
            </PaletteBody>
            <Footer $pr={4}>
              <MiniButton><FaAngleDoubleUp size={7} /></MiniButton>
              <MiniButton><FaAngleDoubleDown size={7} /></MiniButton>
            </Footer>
          </Palette>
          <Workspace>
            <WorkTabs>
              <FlowTab>Flow 1</FlowTab>
              <TabButton $s={22} $h={25} $ml="auto"><Plus s={8} /></TabButton>
              <Slot $ml={4.500}><TabButton $s={26} $h={25}><BulletList w={11.500} h={9} /></TabButton></Slot>
              <Slot $ml={3} />
            </WorkTabs>
            <CanvasRow>
              <Flow />
              <Scroll $w={12}>
                <Triangle $dir="up" $a={6} $b={3.5} $c="#a3a3a3" />
                <Thumb $w={9.500} $h={105} $m={4.500} />
                <Spacer />
                <Triangle $dir="down" $a={6} $b={4} />
              </Scroll>
            </CanvasRow>
            <HScroll>
              <Triangle $dir="left" $a={3} $b={6} $c="#a3a3a3" />
              <Slot $ml={5}><Thumb $w={149.500} $h={9} /></Slot>
              <Spacer />
              <Triangle $dir="right" $a={4} $b={6} />
              <Corner />
            </HScroll>
            <Footer $pr={8}>
              <MiniButton><FaRegMap size={11} /></MiniButton>
              <MiniButton $ml={3}><Minus s={8} /></MiniButton>
              <MiniButton><FaRegCircle size={9} /></MiniButton>
              <MiniButton><Plus s={8} /></MiniButton>
            </Footer>
          </Workspace>
          <Separator $w={6.500}><Grip $w={2.400} $h={41} $mt={245} /></Separator>
          <Sidebar>
            <SideTabs>
              <InfoTab><InfoGlyph w={4.500} h={9} />info</InfoTab>
              <SideButton $on $ml={8.500}><InfoGlyph w={4} h={8} /></SideButton>
              <SideButton $ml={5.500}><FaBug size={10} /></SideButton>
              <SideCaret><Triangle $dir="down" $a={6} $b={4} $c="#888" /></SideCaret>
            </SideTabs>
            <SideBody>
              <SideContent>
                <Section><Chevron w={7} />Information</Section>
                <PropRow $h={25}><TopCell>Flow</TopCell><IdValue>"aaa80f90.531c4"</IdValue></PropRow>
                <PropRow $h={21.600}><span>Name</span><span>Flow 1</span></PropRow>
                <PropRow $h={21.600}><span>Status</span><span>Enabled</span></PropRow>
                <Rule $mt={0} />
                <Section $mt={8}><Chevron w={7} />Description</Section>
                <Rule $mt={9.500} />
              </SideContent>
              <Scroll $w={12}>
                <Triangle $dir="up" $a={5} $b={3.5} $c="#a3a3a3" />
                <Spacer />
                <Triangle $dir="down" $a={5} $b={3.5} $c="#a3a3a3" />
              </Scroll>
            </SideBody>
            <Tips>
              <TipButtons>
                <MiniButton $ml={0}><FaSyncAlt size={8} /></MiniButton>
                <MiniButton $ml={0}><Cross s={6} /></MiniButton>
              </TipButtons>
              <Kbd>ctrl-space</Kbd> will toggle the view of<br />this sidebar
            </Tips>
            <Footer />
          </Sidebar>
        </Editor>
        <DeskEdge />
      </Browser>
    </DesktopBody>
    <WindowTicks />
    <RunningMark $x={1.500} $y={185} $dir="right" />
    <RunningMark $x={49.500} $y={185} $dir="left" />
    <Ring $x={917} $y={47} $w={89} $h={81} />
    <PointerSpot $x={2} $y={90}><Pointer w={8.5} h={14.5} /></PointerSpot>
  </Desktop>
);

/* ---------- menu close-up (right) ---------- */

const CloseUp = styled.section`
  position: relative;
  width: 735px;
  height: 1151px;
  margin-top: 17px;
  border: 5px solid #dedede;
  display: flex;
  flex-direction: column;
  background: #fff;
`;
const BigPanel = styled.div`
  height: 98px;
  flex: none;
  display: flex;
  align-items: flex-start;
  padding-left: 234.500px;
  overflow: hidden;
  background: linear-gradient(#57544c, #3c3b37 40px);
  color: #dfdbd2;
  font: 400 25.500px/33px ${UBUNTU};
  & > span { height: 33px; }
`;
const BigAddress = styled.div`
  height: 69px;
  flex: none;
  display: flex;
  align-items: center;
  background: #f2f1f0;
  border-top: 1px solid #c9c7c3;
  border-bottom: 2px solid #bbb9b5;
  color: #5f6368;
`;
const BigPill = styled.div`
  width: 612px;
  height: 50px;
  padding-right: 12px;
  display: flex;
  align-items: center;
  justify-content: flex-end;
  border-radius: 0 25px 25px 0;
  background: #f1f3f4;
`;
const BigHeader = styled.div`
  height: 71px;
  flex: none;
  display: flex;
  align-items: center;
  padding-left: 283px;
  background: #000;
`;
const BigDeploy = styled.div`
  width: 232px;
  height: 53px;
  padding-left: 21px;
  display: flex;
  align-items: center;
  background: #444;
  color: #8a8a8a;
  font: 400 25px ${SANS};
  & > svg { margin-right: 20px; }
  & > i { margin-left: 35px; }
`;
const BigBody = styled.div`
  flex: 1;
  min-height: 0;
  display: flex;
`;
const BigWorkspace = styled.div`
  width: 174px;
  flex: none;
  display: flex;
  flex-direction: column;
  border-right: 2px solid #bbb;
`;
const BigTabs = styled.div`
  height: 63px;
  flex: none;
  display: flex;
  align-items: flex-end;
  justify-content: flex-end;
  gap: 11px;
  padding-right: 5px;
  box-shadow: inset 0 -2px #c4c4c4, inset 0 2px #aaa;
  & > span { border-width: 2px; border-bottom: none; }
`;
const BigGrid = styled.div`
  width: 146px;
  background:
    repeating-linear-gradient(90deg, #f4f4f4 0 2px, transparent 2px 17.85px) 8.500px 0,
    repeating-linear-gradient(#f4f4f4 0 2px, transparent 2px 17.85px) 0 1.5px,
    #fff;
`;
const BigSidebar = styled.div`
  flex: 1;
  min-width: 0;
  overflow: hidden;
  display: flex;
  flex-direction: column;
  color: #555;
`;
const BigSideTabs = styled.div`
  height: 63px;
  flex: none;
  display: flex;
  align-items: flex-end;
  padding-left: 5px;
  box-shadow: inset 0 -2px #ccc, inset 0 2px #aaa;
`;
const BigInfo = styled.div`
  width: 300px;
  height: 56px;
  padding: 0 0 4px 21px;
  display: flex;
  align-items: center;
  gap: 24px;
  border: 2px solid #bbb;
  border-bottom: none;
  background: #fff;
  font: 700 24.500px ${SANS};
  svg { color: #888; }
`;
const BigSection = styled.div<{ $mt?: number }>`
  height: 70px;
  margin-top: ${(p) => p.$mt ?? 0}px;
  padding-left: 20.500px;
  flex: none;
  display: flex;
  align-items: center;
  gap: 17.500px;
  background: #f3f3f3;
  border-top: ${(p) => (p.$mt ? "2px solid #ddd" : "none")};
  color: #505050;
  font: 700 25px ${SANS};
  svg { color: #777; }
`;
const BigRow = styled.div<{ $h: number; $pb?: number }>`
  height: ${(p) => p.$h}px;
  flex: none;
  padding: 0 0 ${(p) => p.$pb ?? 0}px 10px;
  display: flex;
  align-items: center;
  background: #f8f8f8;
  border-top: 2px solid #ddd;
  color: #666;
  font-size: 25px;
`;
const BigFill = styled.div`
  flex: 1;
  margin-top: 21px;
  border-top: 2px solid #ddd;
  border-bottom: 2px solid #d8d8d8;
  background: linear-gradient(#fff calc(100% - 36px), #efefef);
  box-shadow: inset -5px 0 #f1f1f1;
`;
const BigTips = styled.div`
  height: 30px;
  flex: none;
  display: flex;
  align-items: flex-start;
  gap: 7px;
  padding: 8px 0 0 472px;
  overflow: hidden;
`;
const BigMini = styled.span`
  width: 34px;
  height: 34px;
  flex: none;
  display: flex;
  align-items: center;
  justify-content: center;
  border: 2px solid #ddd;
  background: #fff;
  color: #888;
`;

const Menu = styled.ul`
  position: absolute;
  left: 299px;
  top: 238px;
  width: 426px;
  height: 764px;
  margin: 0;
  padding: 1.500px 0 0;
  list-style: none;
  background: #121212;
  border-left: 1px solid #333;
  border-bottom: 1px solid #444;
  color: #c0c0c0;
  box-shadow: 0 8px 26px rgba(0,0,0,.32);
  clip-path: inset(0 0 -50px -50px);
`;
const MenuItem = styled.li<{ $hover?: boolean }>`
  height: 46.400px;
  padding-left: 19px;
  display: flex;
  align-items: center;
  background: ${(p) => (p.$hover ? "#323232" : "transparent")};
  font: 400 25px/46px ${SANS};
  white-space: nowrap;
`;
const MenuArrow = styled.span`
  width: 53.500px;
`;
const MenuRule = styled.li`
  height: 34px;
  padding: 16px 0 0 3px;
  &::before { content: ""; display: block; height: 2px; background: #333; }
`;
const Highlight = styled.div`
  position: absolute;
  left: 312px;
  top: 701.500px;
  width: 396px;
  height: 48px;
  border: 3px solid #fd2b1e;
  border-radius: 10px;
  filter: drop-shadow(0 4px 3px rgba(0,0,0,.4));
`;

type Entry = { label: string; arrow?: boolean; hover?: boolean } | null;
const MENU: Entry[] = [
  { label: "View", arrow: true }, null,
  { label: "Import" }, { label: "Export" }, null,
  { label: "Search flows" }, null,
  { label: "Configuration nodes" }, { label: "Flows", arrow: true }, { label: "Subflows", arrow: true }, null,
  { label: "Manage palette", hover: true }, null,
  { label: "Settings" }, null,
  { label: "Keyboard shortcuts" }, { label: "Node-RED website" }, { label: "v1.0.3" },
];

const MenuShot = () => (
  <CloseUp>
    <BigPanel>
      <Slot><Nvidia w={47.500} h={31} /></Slot>
      <Slot $ml={10.500}>MAXN</Slot>
      <Slot $ml={21.500}><Wifi w={36} h={25} /></Slot>
      <Slot $ml={21}><Lang $big>En</Lang></Slot>
      <Slot $ml={22.500}><Mail w={32.500} h={22.500} /></Slot>
      <Slot $ml={25}><Volume w={35.500} h={30} /></Slot>
      <Slot $ml={23}>15:27</Slot>
      <Slot $ml={22}><Gear s={29} /></Slot>
    </BigPanel>
    <BigAddress>
      <BigPill><MdStarBorder size={32} /></BigPill>
      <Slot $ml={26}><Avatar $s={35} /></Slot>
      <Slot $ml={22}><MdMoreVert size={36} /></Slot>
    </BigAddress>
    <BigHeader>
      <BigDeploy><DeployGlyph w={49.500} h={34} />Deploy<Triangle $dir="down" $a={15} $b={9} $c="#ccc" /></BigDeploy>
      <Slot $ml={60}><FaExclamationTriangle size={37} color="#c7c7c7" /></Slot>
      <Burger $w={32} $h={27} $ml={69} />
    </BigHeader>
    <BigBody>
      <BigWorkspace>
        <BigTabs>
          <TabButton $s={57} $h={56}><Plus s={20.500} /></TabButton>
          <TabButton $s={57} $h={56}><BulletList w={25} h={19.500} /></TabButton>
        </BigTabs>
        <BigBody>
          <BigGrid />
          <Scroll $w={26} $pt={13}>
            <Triangle $dir="up" $a={13} $b={7} $c="#a3a3a3" />
            <Thumb $w={20} $h={233} $m={8.500} />
          </Scroll>
        </BigBody>
      </BigWorkspace>
      <Separator $w={15} $b={2}><Grip $w={5} $h={89} $mt={544} /></Separator>
      <BigSidebar>
        <BigSideTabs><BigInfo><InfoGlyph w={9} h={19} />info</BigInfo></BigSideTabs>
        <BigSection><Chevron w={15} />Information</BigSection>
        <BigRow $h={55} $pb={6}>Flow</BigRow>
        <BigRow $h={48.400}>Name</BigRow>
        <BigRow $h={48.400}>Status</BigRow>
        <Rule $mt={0} />
        <BigSection $mt={18}><Chevron w={15} />Description</BigSection>
        <BigFill />
        <BigTips>
          <BigMini><FaSyncAlt size={20} /></BigMini>
          <BigMini><Cross s={15} /></BigMini>
        </BigTips>
      </BigSidebar>
    </BigBody>
    <Menu>
      {MENU.map((m, i) =>
        m ? (
          <MenuItem key={i} $hover={m.hover}>
            <MenuArrow>{m.arrow && <Triangle $dir="left" $a={9} $b={17.500} $c="#c7c7c7" />}</MenuArrow>
            {m.label}
          </MenuItem>
        ) : (
          <MenuRule key={i} />
        ),
      )}
    </Menu>
    <PointerSpot $x={639} $y={725.500}><Pointer w={21} h={33} /></PointerSpot>
    <Highlight />
    <Ring $x={648.500} $y={160.500} $w={89} $h={81} />
  </CloseUp>
);

export default function App() {
  return (
    <>
      <GlobalStyle />
      <Slide>
        <NoteColumn>
          <Heading><Bullet />참고</Heading>
          <RedCard>
            <DesktopShot />
            <Note>
              <span>간혹 경고마크 나오는 이유는</span>
              <span>대쉬보드가 설치 안된경우입니다. 그래서</span>
              <NoteStrong>디플로이전에 미리 대시보드를 설치해주세요.</NoteStrong>
            </Note>
          </RedCard>
        </NoteColumn>
        <MenuShot />
        <Callouts>
          <Callout>1. 클릭</Callout>
          <Callout>2. 클릭</Callout>
        </Callouts>
      </Slide>
    </>
  );
}
